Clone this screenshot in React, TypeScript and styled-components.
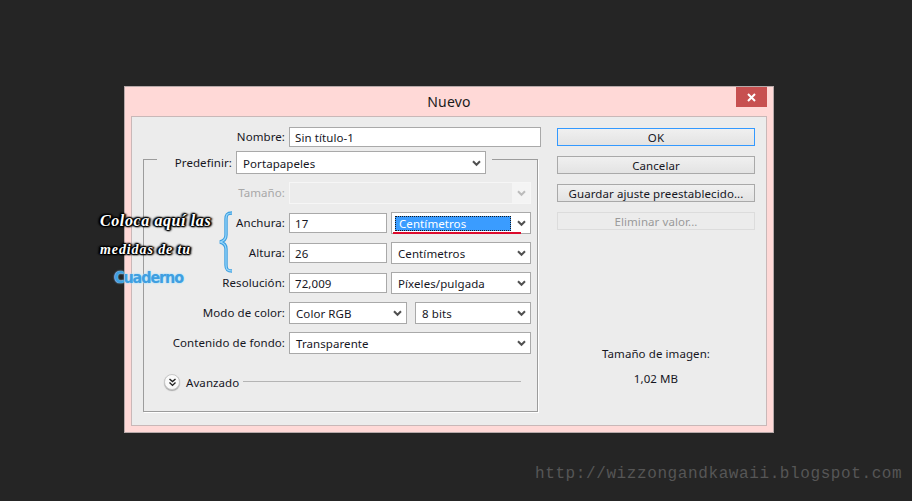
import React from "react";
import styled, { createGlobalStyle } from "styled-components";

const Global = createGlobalStyle`
  html, body { margin: 0; padding: 0; background: #252525; }
  * { box-sizing: border-box; }
`;

const Page = styled.div`
  position: relative;
  width: 912px;
  height: 501px;
  overflow: hidden;
  background: #252525;
  padding: 86px 0 0 124px;
  font-family: "Noto Sans", sans-serif;
  font-size: 11.5px;
  letter-spacing: 0.08px;
  color: #16161e;
`;

const Dialog = styled.div`
  width: 650px;
  height: 347px;
  background: #ffd9d7;
  border: 1px solid #b7a9a9;
  display: flex;
  flex-direction: column;
`;

const TitleBar = styled.div`
  height: 29px;
  flex: none;
  display: grid;
  grid-template-columns: 1fr auto 1fr;
  align-items: start;
`;

const Title = styled.div`
  grid-column: 2;
  font-size: 14px;
  letter-spacing: 0.2px;
  line-height: 30px;
  color: #1a1a1a;
`;

const CloseButton = styled.div`
  grid-column: 3;
  justify-self: end;
  width: 31px;
  height: 20px;
  margin-right: 6px;
  background: #c75050;
  display: flex;
  align-items: center;
  justify-content: center;
`;

const Panel = styled.div`
  margin: 0 6px;
  height: 310px;
  background: #ececec;
  border: 1px solid #c9b8b8;
  padding: 10px 11px 0;
  display: flex;
  gap: 16px;
`;

const LeftColumn = styled.div`
  width: 398px;
  flex: none;
`;

const NameRow = styled.div`
  display: flex;
  align-items: center;
  height: 20px;
  gap: 4px;
`;

const Label = styled.div<{ $w: number; $disabled?: boolean; $up?: boolean }>`
  width: ${(p) => p.$w}px;
  flex: none;
  text-align: right;
  white-space: nowrap;
  line-height: 20px;
  padding-bottom: ${(p) => (p.$up ? 1 : 0)}px;
  color: ${(p) => (p.$disabled ? "#a8a8a8" : "#16161e")};
`;

const TextInput = styled.div<{ $w: number }>`
  width: ${(p) => p.$w}px;
  height: 20px;
  flex: none;
  background: #fff;
  border: 1px solid #a9a9a9;
  padding-left: 5px;
  line-height: 19px;
  white-space: nowrap;
`;

const Group = styled.div`
  width: 395px;
  height: 253px;
  margin-top: 12px;
  border: 1px solid #9c9c9c;
  box-shadow: 1px 1px 0 #fff;
  display: flex;
  flex-direction: column;
  gap: 8px;
`;

const Legend = styled.div`
  width: 335px;
  height: 23px;
  margin: -9px 0 0 13px;
  background: #ececec;
  display: flex;
  align-items: center;
  gap: 4px;
`;

const Row = styled.div`
  height: 22px;
  display: flex;
  align-items: center;
  gap: 4px;
`;

const SelectBox = styled.div<{ $w: number; $h?: number; $disabled?: boolean; $gapLeft?: number }>`
  position: relative;
  width: ${(p) => p.$w}px;
  height: ${(p) => p.$h ?? 22}px;
  margin-left: ${(p) => p.$gapLeft ?? 0}px;
  flex: none;
  display: flex;
  align-items: center;
  padding: 1px 0 0 6px;
  background: ${(p) => (p.$disabled ? "#ececec" : "#fff")};
  border: 1px solid ${(p) => (p.$disabled ? "#f6f6f6" : "#a9a9a9")};
  white-space: nowrap;
`;

const Arrow = styled.svg`
  position: absolute;
  right: 4px;
  top: 50%;
  margin-top: -3px;
  width: 9px;
  height: 7px;
`;

const DisabledTail = styled.div`
  position: absolute;
  right: 0;
  top: 0;
  bottom: 0;
  width: 18px;
  background: #f4f4f4;
`;

const Highlight = styled.div`
  width: 116px;
  height: 15px;
  margin-left: -3px;
  padding-left: 3px;
  line-height: 13px;
  background: #3a9cff;
  color: #fff;
  border: 1px dotted #1a1a1a;
`;

const RedLine = styled.div`
  position: absolute;
  left: 1px;
  bottom: -1px;
  width: 128px;
  height: 2px;
  background: #dc0a2c;
`;

const AdvancedRow = styled.div`
  height: 20px;
  margin: 10px 0 0 20px;
  display: flex;
  align-items: center;
`;

const RoundButton = styled.div`
  width: 16px;
  height: 16px;
  flex: none;
  border-radius: 50%;
  background: #fafafa;
  border: 1px solid #c8c8c8;
  box-shadow: 0 1px 1px #aaa;
  display: flex;
  align-items: center;
  justify-content: center;
`;

const AdvancedText = styled.span`
  width: 57px;
  flex: none;
  margin-left: 6px;
`;

const AdvancedLine = styled.div`
  width: 278px;
  height: 1px;
  margin-top: -1px;
  background: #b4b4b4;
`;

const RightColumn = styled.div`
  width: 198px;
  flex: none;
  padding-top: 1px;
  display: flex;
  flex-direction: column;
  gap: 10px;
`;

const Button = styled.div<{ $variant?: "primary" | "disabled" }>`
  height: 18px;
  text-align: center;
  line-height: 18px;
  white-space: nowrap;
  background: ${(p) =>
    p.$variant === "disabled"
      ? "#ececec"
      : "linear-gradient(#f0f0f0, #e3e3e3)"};
  color: ${(p) => (p.$variant === "disabled" ? "#9a9a9a" : "#16161e")};
  border: 1px solid
    ${(p) =>
      p.$variant === "primary"
        ? "#3399ff"
        : p.$variant === "disabled"
        ? "#dcdcdc"
        : "#a9a9a9"};
`;

const InfoBlock = styled.div`
  margin-top: 106px;
  text-align: center;
  line-height: 16px;
`;

const InfoValue = styled.div`
  margin-top: 9px;
`;

const Annotation = styled.div`
  position: absolute;
  left: 100px;
  top: 211px;
  width: 120px;
`;

const ScriptLine = styled.div<{ $top: number; $size: number; $track: number }>`
  margin-top: ${(p) => p.$top}px;
  font-family: "Liberation Serif", serif;
  font-style: italic;
  font-weight: bold;
  font-size: ${(p) => p.$size}px;
  line-height: 20px;
  letter-spacing: ${(p) => p.$track}px;
  white-space: nowrap;
  color: #fff;
  text-shadow: 0 0 2px #000, 1px 0 1px #000, -1px 0 1px #000, 0 1px 1px #000,
    0 -1px 1px #000, 1px 1px 2px #000, -1px -1px 2px #000, 2px 0 2px #000,
    -2px 0 2px #000;
`;

const NotebookLine = styled.div`
  margin: 8px 0 0 14px;
  font-family: "DejaVu Sans", sans-serif;
  font-stretch: condensed;
  font-weight: bold;
  font-size: 16px;
  line-height: 20px;
  letter-spacing: -1.1px;
  white-space: nowrap;
  color: #3f9fe0;
  text-shadow: 0 0 2px #8fd6ff, 0 0 1px #bfe8ff;
`;

const Brace = styled.svg`
  position: absolute;
  left: 218px;
  top: 211px;
  width: 16px;
  height: 62px;
`;

const Watermark = styled.div`
  position: absolute;
  left: 535px;
  top: 465px;
  font-family: "Liberation Mono", monospace;
  font-size: 16px;
  line-height: 18px;
  letter-spacing: 0.6px;
  color: #565656;
  white-space: nowrap;
`;

const Chevron = () => (
  <Arrow viewBox="0 0 9 7">
    <path d="M1 1.2 L4.5 4.8 L8 1.2" fill="none" stroke="#505050" strokeWidth="2" />
  </Arrow>
);

const App = () => (
  <Page>
    <Global />
    <Dialog>
      <TitleBar>
        <Title>Nuevo</Title>
        <CloseButton>
          <svg width="9" height="9" viewBox="0 0 9 9">
            <path d="M1 1 L8 8 M8 1 L1 8" stroke="#fff" strokeWidth="2" />
          </svg>
        </CloseButton>
      </TitleBar>
      <Panel>
        <LeftColumn>
          <NameRow>
            <Label $w={142}>Nombre:</Label>
            <TextInput $w={252}>Sin título-1</TextInput>
          </NameRow>
          <Group>
            <Legend>
              <Label $w={75}>Predefinir:</Label>
              <SelectBox $w={250} $h={23}>
                Portapapeles
                <Chevron />
              </SelectBox>
            </Legend>
            <Row>
              <Label $w={141} $disabled>Tamaño:</Label>
              <SelectBox $w={242} $disabled>
                <DisabledTail />
                <Arrow viewBox="0 0 9 7">
                  <path d="M1 1.2 L4.5 4.8 L8 1.2" fill="none" stroke="#bcbcbc" strokeWidth="2" />
                </Arrow>
              </SelectBox>
            </Row>
            <Row>
              <Label $w={141}>Anchura:</Label>
              <TextInput $w={98}>17</TextInput>
              <SelectBox $w={140}>
                <Highlight>Centímetros</Highlight>
                <Chevron />
                <RedLine />
              </SelectBox>
            </Row>
            <Row>
              <Label $w={141}>Altura:</Label>
              <TextInput $w={98}>26</TextInput>
              <SelectBox $w={140}>
                Centímetros
                <Chevron />
              </SelectBox>
            </Row>
            <Row>
              <Label $w={141}>Resolución:</Label>
              <TextInput $w={98}>72,009</TextInput>
              <SelectBox $w={140}>
                Píxeles/pulgada
                <Chevron />
              </SelectBox>
            </Row>
            <Row>
              <Label $w={141} $up>Modo de color:</Label>
              <SelectBox $w={118}>
                Color RGB
                <Chevron />
              </SelectBox>
              <SelectBox $w={116} $gapLeft={4}>
                8 bits
                <Chevron />
              </SelectBox>
            </Row>
            <Row>
              <Label $w={141} $up>Contenido de fondo:</Label>
              <SelectBox $w={242}>
                Transparente
                <Chevron />
              </SelectBox>
            </Row>
            <AdvancedRow>
              <RoundButton>
                <svg width="9" height="9" viewBox="0 0 9 9">
                  <path d="M1.5 1 L4.5 3.6 L7.5 1 M1.5 4.6 L4.5 7.4 L7.5 4.6" fill="none" stroke="#222" strokeWidth="1.4" />
                </svg>
              </RoundButton>
              <AdvancedText>Avanzado</AdvancedText>
              <AdvancedLine />
            </AdvancedRow>
          </Group>
        </LeftColumn>
        <RightColumn>
          <Button $variant="primary">OK</Button>
          <Button>Cancelar</Button>
          <Button>Guardar ajuste preestablecido...</Button>
          <Button $variant="disabled">Eliminar valor...</Button>
          <InfoBlock>
            Tamaño de imagen:
            <InfoValue>1,02 MB</InfoValue>
          </InfoBlock>
        </RightColumn>
      </Panel>
    </Dialog>
    <Annotation>
      <ScriptLine $top={0} $size={16} $track={0.6}>Coloca aquí las</ScriptLine>
      <ScriptLine $top={9} $size={14} $track={0.9}>medidas de tu</ScriptLine>
      <NotebookLine>Cuaderno</NotebookLine>
    </Annotation>
    <Brace viewBox="0 0 16 62">
      <path d="M14 2 C9 2 8 4 8 8 L8 24 C8 28 6 30 2 31 C6 32 8 34 8 38 L8 54 C8 58 9 60 14 60" fill="none" stroke="#3d9fe0" strokeWidth="3.4" />
      <path d="M14 2 C9 2 8 4 8 8 L8 24 C8 28 6 30 2 31 C6 32 8 34 8 38 L8 54 C8 58 9 60 14 60" fill="none" stroke="#9ad8fb" strokeWidth="1.2" />
    </Brace>
    <Watermark>http://wizzongandkawaii.blogspot.com</Watermark>
  </Page>
);

export default App;
